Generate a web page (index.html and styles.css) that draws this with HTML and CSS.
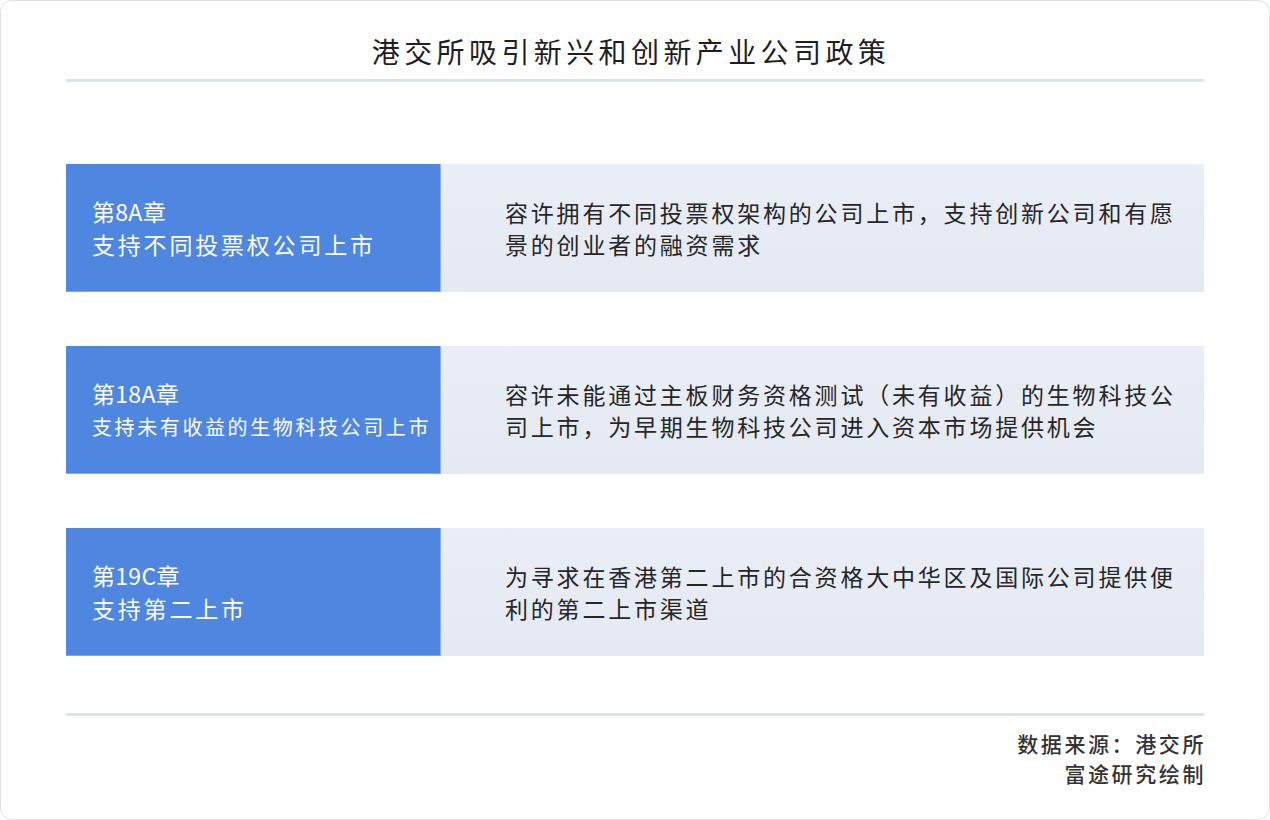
FILE: index.html
```html
<!DOCTYPE html>
<html lang="zh-CN">
<head>
<meta charset="utf-8">
<title>港交所吸引新兴和创新产业公司政策</title>
<link rel="stylesheet" href="styles.css">
</head>
<body>
<div class="card">
  <h1 class="title">港交所吸引新兴和创新产业公司政策</h1>
  <div class="rule"></div>
  <div class="rows">
    <div class="row">
      <div class="label">
        <div class="chapter">第8A章</div>
        <div class="sub">支持不同投票权公司上市</div>
      </div>
      <div class="desc">容许拥有不同投票权架构的公司上市，支持创新公司和有愿景的创业者的融资需求</div>
    </div>
    <div class="row">
      <div class="label">
        <div class="chapter">第18A章</div>
        <div class="sub sub-small">支持未有收益的生物科技公司上市</div>
      </div>
      <div class="desc">容许未能通过主板财务资格测试（未有收益）的生物科技公司上市，为早期生物科技公司进入资本市场提供机会</div>
    </div>
    <div class="row">
      <div class="label">
        <div class="chapter">第19C章</div>
        <div class="sub">支持第二上市</div>
      </div>
      <div class="desc">为寻求在香港第二上市的合资格大中华区及国际公司提供便利的第二上市渠道</div>
    </div>
  </div>
  <div class="rule rule-bottom"></div>
  <div class="source">
    <div>数据来源：港交所</div>
    <div>富途研究绘制</div>
  </div>
</div>
</body>
</html>
```

FILE: styles.css
```css
html, body {
  margin: 0;
  padding: 0;
  background: #ffffff;
}

body {
  font-family: "Noto Sans CJK SC", "Noto Sans", sans-serif;
  color: #222222;
}

.card {
  box-sizing: border-box;
  width: 1270px;
  height: 820px;
  border: 1px solid #dfe2e9;
  border-radius: 12px;
  padding: 0 65px;
  display: flex;
  flex-direction: column;
}

.title {
  margin: 32px 0 0 0;
  height: 36px;
  line-height: 36px;
  font-size: 28px;
  font-weight: 400;
  letter-spacing: 4.4px;
  padding-right: 8px;
  text-align: center;
  color: #1f1f1f;
}

.rule {
  height: 3px;
  margin-top: 10px;
  background: #dbe3ee;
}

.rows {
  margin-top: 82px;
  display: flex;
  flex-direction: column;
  gap: 54px;
}

.row {
  height: 128px;
  display: grid;
  grid-template-columns: 375px 1fr;
}

.label {
  background: #4f86e0;
  color: #ffffff;
  padding-left: 26px;
  display: flex;
  flex-direction: column;
  justify-content: center;
  border-right: 1px solid #8fb2ee;
  box-shadow: inset 0 -1px 0 #7ea6ea;
}

.chapter {
  font-size: 23px;
  line-height: 33px;
  letter-spacing: 0.3px;
}

.sub {
  font-size: 23px;
  line-height: 33px;
  letter-spacing: 2.8px;
  white-space: nowrap;
}

.sub-small {
  font-size: 20px;
  letter-spacing: 2.6px;
}

.desc {
  background: linear-gradient(#eaeef6, #e4e9f2);
  padding: 0 18px 0 64px;
  display: flex;
  align-items: center;
  font-size: 23px;
  line-height: 32px;
  letter-spacing: 2.8px;
  color: #262626;
}

.rule-bottom {
  margin-top: 57px;
}

.source {
  margin-top: 12px;
  text-align: right;
  font-size: 21px;
  line-height: 30px;
  font-weight: 500;
  letter-spacing: 2.6px;
  margin-right: -2px;
  color: #333333;
}
```
